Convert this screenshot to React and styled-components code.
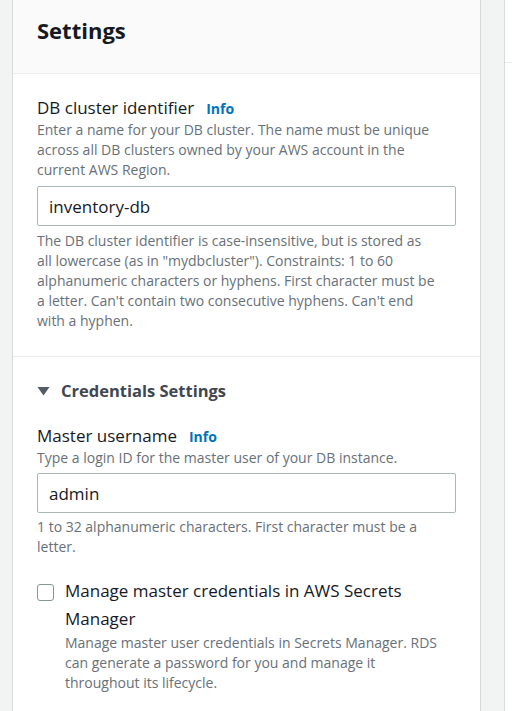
import React from "react";
import styled, { createGlobalStyle } from "styled-components";

const Global = createGlobalStyle`
  html, body { margin: 0; padding: 0; background: #f2f3f3; }
  body { font-family: "Open Sans", "Noto Sans", Arial, sans-serif; color: #16191f; -webkit-font-smoothing: antialiased; }
  * { box-sizing: border-box; }
`;

const Page = styled.div`
  display: flex;
  min-height: 711px;
  padding-left: 12px;
  overflow: hidden;
`;

const Panel = styled.div`
  width: 469px;
  flex: none;
  background: #ffffff;
  border-left: 1px solid #d5dbdb;
  border-right: 1px solid #d5dbdb;
`;

const Gutter = styled.div`
  width: 23px;
  flex: none;
`;

const SidePanel = styled.div`
  flex: 1;
  background: #ffffff;
  border-left: 1px solid #d5dbdb;
`;

const SideHeader = styled.div`
  height: 63px;
  border-bottom: 1px solid #eaeded;
`;

const Header = styled.div`
  height: 74px;
  background: #fafafa;
  border-bottom: 1px solid #eaeded;
  padding: 16px 24px 0;
`;

const Title = styled.h2`
  margin: 0;
  font-size: 22px;
  line-height: 28px;
  font-weight: 700;
  color: #16191f;
`;

const Section = styled.div`
  padding: ${(p) => p.$pt}px 24px ${(p) => p.$pb}px;
  border-bottom: ${(p) => (p.$divider ? "1px solid #eaeded" : "none")};
`;

const Label = styled.div`
  display: flex;
  align-items: baseline;
  gap: 12px;
  font-size: 17px;
  line-height: 22px;
  color: #16191f;
`;

const Info = styled.span`
  font-size: 14px;
  font-weight: 700;
  color: #0073bb;
`;

const Desc = styled.div`
  font-size: 14px;
  line-height: 20px;
  color: #687078;
  white-space: nowrap;
  margin-top: ${(p) => p.$mt || 0}px;
`;

const Input = styled.div`
  margin-top: ${(p) => p.$mt}px;
  height: 40px;
  border: 1px solid #aab7b8;
  border-radius: 2px;
  padding: 0 11px;
  display: flex;
  align-items: center;
  font-size: 17px;
  color: #16191f;
`;

const Collapse = styled.div`
  display: flex;
  align-items: center;
  gap: 11px;
  font-size: 16.5px;
  line-height: 24px;
  font-weight: 700;
  color: #414750;
  margin-bottom: 22px;
`;

const CheckRow = styled.div`
  display: flex;
  gap: 11px;
  margin-top: ${(p) => p.$mt}px;
`;

const Box = styled.div`
  width: 17px;
  height: 17px;
  flex: none;
  margin-top: 7px;
  border: 1px solid #879596;
  border-radius: 3px;
  background: #fff;
`;

const CheckText = styled.div`
  font-size: 17px;
  line-height: 28px;
  color: #16191f;
`;

export default function App() {
  return (
    <>
      <Global />
      <Page>
        <Panel>
          <Header>
            <Title>Settings</Title>
          </Header>
          <Section $pt={23} $pb={25} $divider>
            <Label>
              DB cluster identifier <Info>Info</Info>
            </Label>
            <Desc>
              Enter a name for your DB cluster. The name must be unique<br />
              across all DB clusters owned by your AWS account in the<br />
              current AWS Region.
            </Desc>
            <Input $mt={6}>inventory-db</Input>
            <Desc $mt={5}>
              The DB cluster identifier is case-insensitive, but is stored as<br />
              all lowercase (as in "mydbcluster"). Constraints: 1 to 60<br />
              alphanumeric characters or hyphens. First character must be<br />
              a letter. Can't contain two consecutive hyphens. Can't end<br />
              with a hyphen.
            </Desc>
          </Section>
          <Section $pt={22} $pb={20}>
            <Collapse>
              <svg width="13" height="10" viewBox="0 0 13 10">
                <path d="M0.5 1 L12.5 1 L6.5 9.5 Z" fill="#545b64" />
              </svg>
              Credentials Settings
            </Collapse>
            <Label>
              Master username <Info>Info</Info>
            </Label>
            <Desc>Type a login ID for the master user of your DB instance.</Desc>
            <Input $mt={5}>admin</Input>
            <Desc $mt={4}>
              1 to 32 alphanumeric characters. First character must be a<br />
              letter.
            </Desc>
            <CheckRow $mt={20}>
              <Box />
              <div>
                <CheckText>
                  Manage master credentials in AWS Secrets<br />
                  Manager
                </CheckText>
                <Desc>
                  Manage master user credentials in Secrets Manager. RDS<br />
                  can generate a password for you and manage it<br />
                  throughout its lifecycle.
                </Desc>
              </div>
            </CheckRow>
          </Section>
        </Panel>
        <Gutter />
        <SidePanel>
          <SideHeader />
        </SidePanel>
      </Page>
    </>
  );
}
